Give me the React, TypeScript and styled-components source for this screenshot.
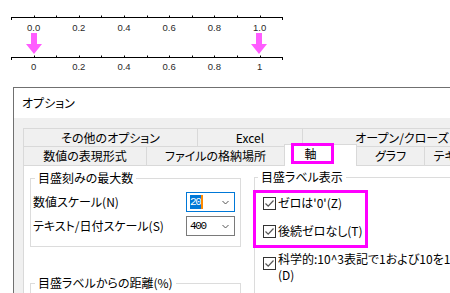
import React from "react";
import styled, { createGlobalStyle } from "styled-components";

const Global = createGlobalStyle`
  html, body { margin: 0; padding: 0; background: #fff; }
  body {
    width: 450px; height: 293px; overflow: hidden;
    font-family: "Noto Sans CJK JP", "Noto Sans", sans-serif;
    color: #000;
  }
  * { box-sizing: border-box; }
`;

const Page = styled.div`
  width: 450px;
  height: 293px;
  overflow: hidden;
  display: flex;
  flex-direction: column;
`;

const Figure = styled.svg`
  display: block;
  flex: none;
  width: 450px;
  height: 87px;
`;

const Dialog = styled.section`
  flex: none;
  margin-left: 13px;
  height: 206px;
  border-top: 1px solid #707070;
  border-left: 1px solid #707070;
  display: flex;
  flex-direction: column;
  font-size: 12px;
  line-height: 16px;
  font-feature-settings: "palt";
`;

const TitleBar = styled.div`
  flex: none;
  height: 30px;
  background: #fff;
  display: flex;
  align-items: center;
  padding-left: 8px;
`;

const Body = styled.div`
  flex: 1;
  min-height: 0;
  background: #f0f0f0;
  padding: 10px 0 0 9px;
  display: flex;
  flex-direction: column;
`;

const TabRow = styled.div<{ $h: number }>`
  flex: none;
  display: flex;
  height: ${(p) => p.$h}px;
`;

const Tab = styled.div<{ $w: number }>`
  flex: none;
  width: ${(p) => p.$w}px;
  border: 1px solid #d9d9d9;
  border-bottom: none;
  margin-right: -1px;
  background: #f0f0f0;
  display: flex;
  align-items: center;
  justify-content: center;
  white-space: nowrap;
`;

const ActiveTab = styled.div<{ $w: number }>`
  flex: none;
  position: relative;
  z-index: 2;
  width: ${(p) => p.$w}px;
  height: 22px;
  margin-top: -2px;
  margin-right: -1px;
  border: 1px solid #d9d9d9;
  border-bottom: none;
  background: #fff;
  display: flex;
  align-items: flex-start;
  padding-left: 6px;
`;

const TabMark = styled.div`
  width: 43px;
  height: 21px;
  margin-top: -2px;
  border: 3px solid #ff00ff;
  display: flex;
  align-items: center;
  justify-content: center;
  padding-right: 4px;
`;

const Panel = styled.div`
  flex: 1;
  min-height: 0;
  background: #fff;
  border-top: 1px solid #d9d9d9;
  border-left: 1px solid #d9d9d9;
  display: flex;
  align-items: flex-start;
`;

const LeftCol = styled.div`
  flex: none;
  width: 217px;
  padding-left: 6px;
  display: flex;
  flex-direction: column;
`;

const RightCol = styled.div`
  flex: none;
  width: 260px;
  margin-left: 13px;
  display: flex;
  flex-direction: column;
`;

const Group = styled.fieldset<{ $mt: number; $minH?: number }>`
  margin: ${(p) => p.$mt}px 0 0 0;
  padding: 0 5px 10px 2px;
  border: 1px solid #dcdcdc;
  min-width: 0;
  min-height: ${(p) => p.$minH ?? 0}px;
`;

const WideGroup = styled.fieldset`
  margin: 3px 0 0 0;
  padding: 0 0 10px 0;
  border: 1px solid #dcdcdc;
  min-width: 0;
  width: 260px;
`;

const Legend = styled.legend<{ $ml: number }>`
  padding: 0 3px;
  margin-left: ${(p) => p.$ml}px;
  font-size: 12px;
  line-height: 16px;
  white-space: nowrap;
`;

const Fields = styled.div`
  margin-top: 6px;
  display: flex;
  flex-direction: column;
  gap: 4px;
`;

const FieldRow = styled.div`
  display: flex;
  align-items: center;
  height: 20px;
`;

const FieldLabel = styled.span`
  flex: 1;
  white-space: nowrap;
`;

const Select = styled.div<{ $focused?: boolean }>`
  flex: none;
  width: 49px;
  height: 20px;
  border: 1px solid ${(p) => (p.$focused ? "#0078d7" : "#7a7a7a")};
  background: #fff;
  display: flex;
  align-items: center;
  padding-left: 3px;
`;

const Value = styled.span<{ $selected?: boolean }>`
  font-family: "Liberation Mono", "DejaVu Sans Mono", monospace;
  font-size: 11px;
  letter-spacing: -1.4px;
  line-height: 14px;
  height: 14px;
  padding-right: 1px;
  background: ${(p) => (p.$selected ? "#0078d7" : "transparent")};
  color: ${(p) => (p.$selected ? "#fff" : "#000")};
`;

const Caret = styled.span`
  width: 2px;
  height: 14px;
  background: #ff8a00;
`;

const Chevron = styled.svg`
  margin-left: auto;
  margin-right: 5px;
  width: 7px;
  height: 5px;
`;

const Highlight = styled.div`
  margin-top: 5px;
  margin-left: -2px;
  width: 115px;
  border: 3px solid #ff00ff;
  padding: 2px 0 6px 7px;
  display: flex;
  flex-direction: column;
  gap: 12px;
`;

const CheckRow = styled.div<{ $pl?: number; $mt?: number }>`
  display: flex;
  align-items: flex-start;
  gap: 2px;
  padding-left: ${(p) => p.$pl ?? 0}px;
  margin-top: ${(p) => p.$mt ?? 0}px;
  line-height: 16px;
  white-space: nowrap;
`;

const Box = styled.span<{ $mt: number }>`
  flex: none;
  width: 13px;
  height: 13px;
  margin-top: ${(p) => p.$mt}px;
  border: 1px solid #333;
  background: #fff;
  display: flex;
  align-items: center;
  justify-content: center;
`;

const CheckText = styled.span`
  display: flex;
  flex-direction: column;
`;

const Check = ({ mt }: { mt: number }) => (
  <Box $mt={mt}>
    <svg width="11" height="11" viewBox="0 0 11 11">
      <polyline points="1.5,5.5 4.2,8.2 9.5,2.5" fill="none" stroke="#555" strokeWidth="1.2" />
    </svg>
  </Box>
);

const X0 = 11;
const STEP = 22.6;

const Axis = ({ y, labels, labelY }: { y: number; labels: string[]; labelY: number }) => {
  const ticks = Array.from({ length: 13 }, (_, i) => X0 + STEP * i);
  return (
    <g>
      <line x1={X0} x2={283} y1={y + 0.5} y2={y + 0.5} stroke="#000" strokeWidth="1" />
      {ticks.map((x, i) => {
        const end = i === 0 || i === 12;
        const xx = Math.round(i === 12 ? 282 : x) + 0.5;
        return (
          <line
            key={i}
            x1={xx}
            x2={xx}
            y1={end ? y + 0.5 : y - 1.5}
            y2={end ? y + 3 : y + 0.5}
            stroke="#000"
            strokeWidth="1"
          />
        );
      })}
      {labels.map((l, k) => (
        <text
          key={l}
          x={X0 + STEP * (2 * k + 1)}
          y={labelY}
          textAnchor="middle"
          fontFamily="'Liberation Sans', Arial, sans-serif"
          fontSize="9.5"
          fill="#2a2a2a"
        >
          {l}
        </text>
      ))}
    </g>
  );
};

const Arrow = ({ x }: { x: number }) => (
  <polygon
    points={`${x - 3},33 ${x + 3},33 ${x + 3},44 ${x + 8},44 ${x},54 ${x - 8},44 ${x - 3},44`}
    fill="#ff5cff"
  />
);

const ChevronIcon = () => (
  <Chevron viewBox="0 0 7 5">
    <polyline points="0.5,1 3.5,4 6.5,1" fill="none" stroke="#555" strokeWidth="1" />
  </Chevron>
);

export default function App() {
  return (
    <Page>
      <Global />
      <Figure viewBox="0 0 450 87">
        <Axis y={17} labels={["0.0", "0.2", "0.4", "0.6", "0.8", "1.0"]} labelY={31} />
        <Arrow x={34} />
        <Arrow x={259} />
        <Axis y={57} labels={["0", "0.2", "0.4", "0.6", "0.8", "1"]} labelY={70} />
      </Figure>
      <Dialog>
        <TitleBar>オプション</TitleBar>
        <Body>
          <TabRow $h={18}>
            <Tab $w={175}>その他のオプション</Tab>
            <Tab $w={106}>Excel</Tab>
            <Tab $w={200}>オープン/クローズ</Tab>
          </TabRow>
          <TabRow $h={19}>
            <Tab $w={124}>数値の表現形式</Tab>
            <Tab $w={139}>ファイルの格納場所</Tab>
            <ActiveTab $w={73}>
              <TabMark>軸</TabMark>
            </ActiveTab>
            <Tab $w={69}>グラフ</Tab>
            <Tab $w={100}>テキストフォント</Tab>
          </TabRow>
          <Panel>
            <LeftCol>
              <Group $mt={4}>
                <Legend $ml={2}>目盛刻みの最大数</Legend>
                <Fields>
                  <FieldRow>
                    <FieldLabel>数値スケール(N)</FieldLabel>
                    <Select $focused>
                      <Value $selected>20</Value>
                      <Caret />
                      <ChevronIcon />
                    </Select>
                  </FieldRow>
                  <FieldRow>
                    <FieldLabel>テキスト/日付スケール(S)</FieldLabel>
                    <Select>
                      <Value>400</Value>
                      <ChevronIcon />
                    </Select>
                  </FieldRow>
                </Fields>
              </Group>
              <Group $mt={28} $minH={40}>
                <Legend $ml={2}>目盛ラベルからの距離(%)</Legend>
              </Group>
            </LeftCol>
            <RightCol>
              <WideGroup>
                <Legend $ml={3}>目盛ラベル表示</Legend>
                <Highlight>
                  <CheckRow>
                    <Check mt={2} />
                    <CheckText>ゼロは'0'(Z)</CheckText>
                  </CheckRow>
                  <CheckRow>
                    <Check mt={2} />
                    <CheckText>後続ゼロなし(T)</CheckText>
                  </CheckRow>
                </Highlight>
                <CheckRow $pl={8} $mt={3}>
                  <Check mt={6} />
                  <CheckText>
                    <span>科学的:10^3表記で1および10を10^1として表示</span>
                    <span>(D)</span>
                  </CheckText>
                </CheckRow>
              </WideGroup>
            </RightCol>
          </Panel>
        </Body>
      </Dialog>
    </Page>
  );
}
